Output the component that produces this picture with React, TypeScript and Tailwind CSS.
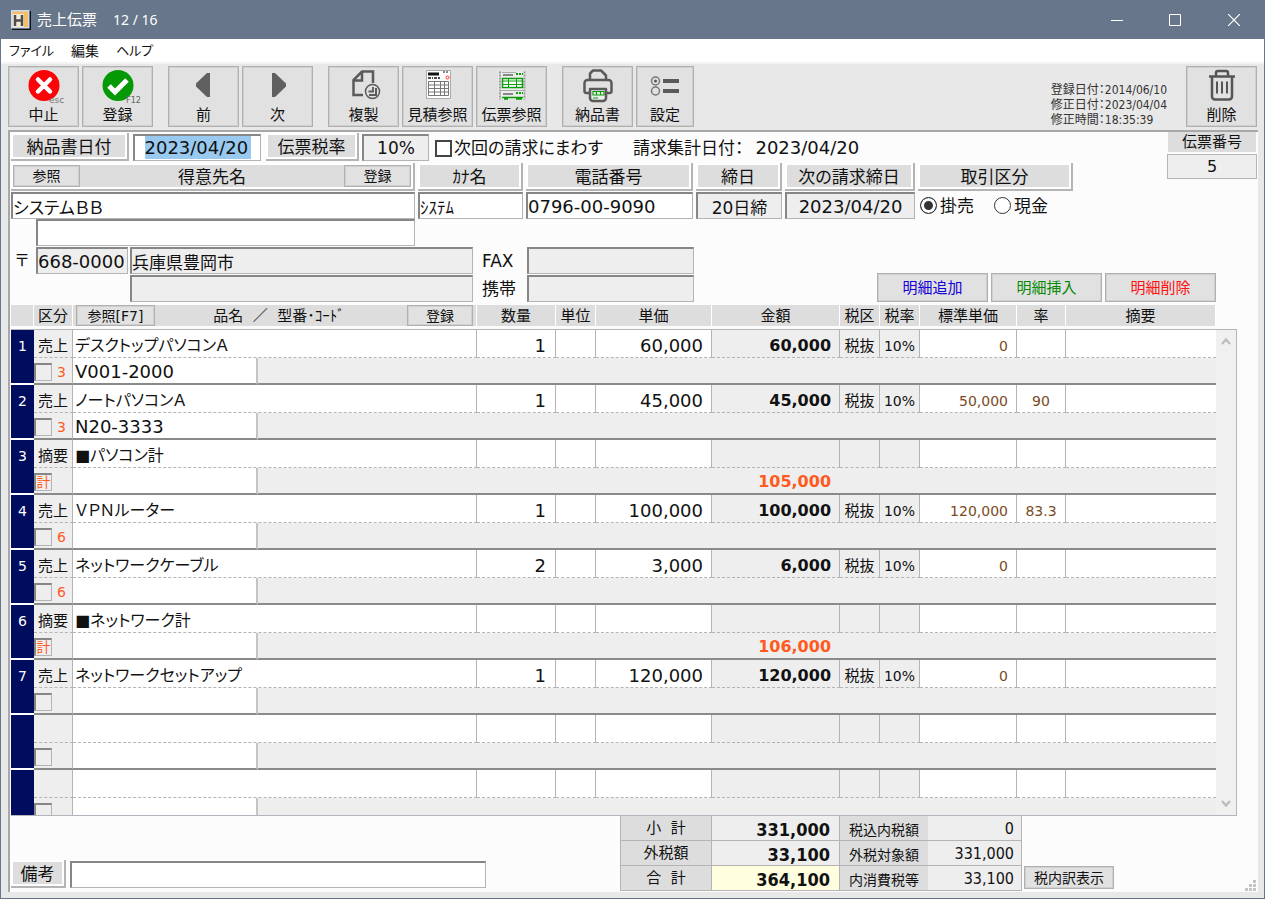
import type { ReactNode } from 'react'
import clsx from 'clsx'

const lines = [
  { no: 1, kind: '売上', name: 'デスクトップパソコンＡ', code: 'V001-2000', mark: '3', qty: '1', price: '60,000', amount: '60,000', std: '0' },
  { no: 2, kind: '売上', name: 'ノートパソコンＡ', code: 'N20-3333', mark: '3', qty: '1', price: '45,000', amount: '45,000', std: '50,000', rate: '90' },
  { no: 3, kind: '摘要', name: '■パソコン計', subtotal: '105,000' },
  { no: 4, kind: '売上', name: 'ＶＰＮルーター', mark: '6', qty: '1', price: '100,000', amount: '100,000', std: '120,000', rate: '83.3' },
  { no: 5, kind: '売上', name: 'ネットワークケーブル', mark: '6', qty: '2', price: '3,000', amount: '6,000', std: '0' },
  { no: 6, kind: '摘要', name: '■ネットワーク計', subtotal: '106,000' },
  { no: 7, kind: '売上', name: 'ネットワークセットアップ', qty: '1', price: '120,000', amount: '120,000', std: '0' },
  {},
  {},
] as any[]

const totals = [
  { label: '小  計', value: '331,000', sub: '税込内税額', subValue: '0' },
  { label: '外税額', value: '33,100', sub: '外税対象額', subValue: '331,000' },
  { label: '合  計', value: '364,100', sub: '内消費税等', subValue: '33,100' },
]

const sunken = 'border-t-2 border-l-2 border-r border-b border-t-[#868686] border-l-[#868686] border-r-[#b4b4b8] border-b-[#b4b4b8]'
const btn = 'border border-[#b0b0b0] bg-[#e1e1e1] shadow-[inset_0_0_0_1px_#d0d0d0]'

function Label({ className, children }: { className?: string; children: ReactNode }) {
  return (
    <div className={clsx('flex h-7 shrink-0 items-center justify-center border-r-2 border-b-2 border-[#b4b4b4] bg-[#dddddd] pt-0.5 text-[17px] leading-5 whitespace-nowrap shadow-[inset_0_0_0_2px_#fff]', className)}>
      {children}
    </div>
  )
}

function Field({ value = '', label, className, disabled }: { value?: string; label: string; className?: string; disabled?: boolean }) {
  return (
    <input
      aria-label={label}
      defaultValue={value}
      readOnly={disabled}
      className={clsx('h-[27px] shrink-0 leading-6 outline-none', sunken, disabled ? 'bg-[#eeeeee]' : 'bg-white', className)}
    />
  )
}

function ToolButton({ label, className, children }: { label: string; className?: string; children: ReactNode }) {
  return (
    <button className={clsx('flex h-[61px] shrink-0 flex-col items-center pt-0.5', btn, className ?? 'w-[71px]')}>
      <svg width="44" height="36" viewBox="0 0 44 36" fill="none" className="shrink-0 overflow-visible">{children}</svg>
      <span className="text-[15px] leading-5 whitespace-nowrap">{label}</span>
    </button>
  )
}

function Cols() {
  return (
    <colgroup>
      <col className="w-[23px]" />
      <col className="w-[39px]" />
      <col className="w-[185px]" />
      <col className="w-[219px]" />
      <col className="w-[79px]" />
      <col className="w-[40px]" />
      <col className="w-[116px]" />
      <col className="w-[128px]" />
      <col className="w-[40px]" />
      <col className="w-[40px]" />
      <col className="w-[97px]" />
      <col className="w-[49px]" />
      <col />
    </colgroup>
  )
}

function LineRows({ item }: { item: any }) {
  const cell = 'h-7 border-r border-r-[#b4b4b4] border-b border-b-[#b4b4b4] [border-bottom-style:dashed] whitespace-nowrap leading-5 pt-1'
  const low = 'h-[27px] border-b-2 border-b-[#8a8a8a] bg-[#eeeeee]'
  return (
    <>
      <tr>
        <td rowSpan={2} className="border-b-2 border-white bg-[#000c5e] pt-1 text-center align-top text-sm leading-6 text-white">{item.no}</td>
        <td className={clsx(cell, 'bg-[#eeeeee] text-center text-[15px]')}>{item.kind}</td>
        <td colSpan={2} className={clsx(cell, 'bg-white pl-0.5 text-base/5')}>{item.name}</td>
        <td className={clsx(cell, 'bg-white pr-[9px] text-right text-lg/5')}>{item.qty}</td>
        <td className={clsx(cell, 'bg-white')} />
        <td className={clsx(cell, 'bg-white pr-2 text-right text-lg/5')}>{item.price}</td>
        <td className={clsx(cell, 'bg-[#eeeeee] pr-2 text-right text-base/5 font-bold')}>{item.amount}</td>
        <td className={clsx(cell, 'bg-[#eeeeee] text-center text-[15px]')}>{item.amount && '税抜'}</td>
        <td className={clsx(cell, 'bg-[#eeeeee] text-center text-sm/5')}>{item.amount && '10%'}</td>
        <td className={clsx(cell, 'bg-white pr-2 text-right text-sm/5 text-[#7b4a1e]')}>{item.std}</td>
        <td className={clsx(cell, 'bg-white text-center text-sm/5 text-[#7b4a1e]')}>{item.rate}</td>
        <td className="h-7 border-b border-dashed border-[#b4b4b4] bg-white" />
      </tr>
      <tr>
        <td className={clsx(low, 'border-r border-r-[#b4b4b4]')}>
          <div className="flex items-center gap-[5px] pt-0.5 text-sm leading-5 text-[#ff5a1e]">
            {item.subtotal ? (
              <span className={clsx('flex size-[18px] items-center justify-center', sunken)}>計</span>
            ) : (
              <input type="checkbox" aria-label="行選択" className={clsx('size-[18px] appearance-none', sunken)} />
            )}
            {item.mark}
          </div>
        </td>
        <td className="h-[27px] border-r-2 border-b-2 border-r-[#c4c4c4] border-b-[#8a8a8a] bg-white pt-0.5 pl-0.5 text-lg/5">{item.code}</td>
        <td colSpan={4} className={low} />
        <td className={clsx(low, 'pt-0.5 pr-[9px] text-right text-base/5 font-bold text-[#ff5a1e]')}>{item.subtotal}</td>
        <td colSpan={5} className={low} />
      </tr>
    </>
  )
}

export default function App() {
  const th = 'h-[21px] border-r border-white bg-[#dddddd] text-center text-[15px] leading-5 font-normal whitespace-nowrap'
  return (
    <div className="flex min-h-screen flex-col border-x border-b border-[#67768a] bg-[#e8e8e8] font-['DejaVu_Sans','Noto_Sans_CJK_JP',sans-serif] text-[#111] [font-feature-settings:'palt']">
      {/* Title bar */}
      <header className="flex h-[39px] items-center bg-[#67768a] pl-[10px] text-white">
        <svg width="20" height="20" viewBox="0 0 20 20">
          <path d="M1 1h19v19H1z" fill="#111" />
          <path d="M0 0h18.500v18.500H0z" fill="#c9dcf2" />
          <path d="M1.500 1.500H17V17H1.500z" fill="#f6bd62" />
          <path d="M1.500 4H13v13H1.500z" fill="#f4ead8" />
          <path d="M4 5v11M11 5v11M4 10.500h7" stroke="#4d4d4d" strokeWidth="2.500" />
        </svg>
        <h1 className="flex gap-4 pl-1.5 font-['Noto_Sans','Noto_Sans_CJK_JP',sans-serif] text-[15px]">
          <span>売上伝票</span>
          <span className="text-sm leading-6">12 / 16</span>
        </h1>
        <div className="ml-auto flex">
          <button aria-label="最小化" className="flex h-[39px] w-[58px] items-center justify-center">
            <svg width="12" height="12" viewBox="0 0 12 12"><path d="M0 6.5h12" stroke="#fff" /></svg>
          </button>
          <button aria-label="最大化" className="flex h-[39px] w-[58px] items-center justify-center">
            <svg width="12" height="12" viewBox="0 0 12 12"><path d="M.5.5h11v11H.5z" fill="none" stroke="#fff" /></svg>
          </button>
          <button aria-label="閉じる" className="flex h-[39px] w-[60px] items-center justify-center">
            <svg width="12" height="12" viewBox="0 0 12 12"><path d="M0 0l12 12M12 0L0 12" stroke="#fff" strokeWidth="1.2" /></svg>
          </button>
        </div>
      </header>

      <nav className="flex h-[23px] items-center gap-[17px] bg-white pl-2 text-[13px] leading-5">
        <button>ファイル</button>
        <button className="text-sm">編集</button>
        <button>ヘルプ</button>
      </nav>

      {/* Toolbar */}
      <div className="flex items-start border-t-2 border-[#f4f4f4] px-[7px] py-0.5">
        <div className="flex gap-[3px]">
          <ToolButton label="中止">
            <circle cx="22" cy="16.500" r="15.5" fill="#fb0307" />
            <path d="M16 10.500l12 12M28 10.500l-12 12" stroke="#fff" strokeWidth="4.5" strokeLinecap="round" />
            <text x="27" y="34" fontSize="9" fill="#777">esc</text>
          </ToolButton>
          <ToolButton label="登録">
            <circle cx="22" cy="16.500" r="15.5" fill="#069906" />
            <path d="M13 17l6 6 12-12" stroke="#fff" strokeWidth="5" />
            <text x="30" y="34" fontSize="9" fill="#666" fontFamily="DejaVu Sans Condensed">F12</text>
          </ToolButton>
        </div>
        <div className="ml-[15px] flex gap-[3px]">
          <ToolButton label="前">
            <path d="M28 4v24h-3L14 17.500v-3L25 4z" fill="#606060" />
          </ToolButton>
          <ToolButton label="次">
            <path d="M16 4v24h3L30 17.500v-3L19 4z" fill="#606060" />
          </ToolButton>
        </div>
        <div className="ml-[15px] flex gap-[3px]">
          <ToolButton label="複製">
            <g stroke="#5a5a5a" strokeWidth="2.500">
              <path d="M21 26h-9.500V11L20 2.500h11V14M20 2.500v9h-8.500" />
              <circle cx="30.500" cy="22.500" r="7" strokeWidth="1.500" />
              <path d="M34 19v7h-7" strokeWidth="2" />
              <path d="M31 18v4.500h-4.500" strokeWidth="1.800" />
            </g>
          </ToolButton>
          <ToolButton label="見積参照">
            <path d="M10.500 1.500h24v28h-24z" fill="#fff" stroke="#aaa" />
            <path d="M12 5h11" stroke="#111" strokeWidth="3" />
            <path d="M12 9h5M18 9h6" stroke="#111" strokeWidth="1.500" strokeDasharray="3 1" />
            <path d="M27 3h6" stroke="#666" strokeDasharray="2 1" strokeWidth="1.500" />
            <circle cx="31.500" cy="8.500" r="1.500" stroke="#f22" />
            <path d="M12.500 12.500h20v14h-20zM12.500 16h20M12.500 19.500h20M12.500 23h20M18.500 12.500v14M24.500 12.500v14M28.500 12.500v14" stroke="#777" />
          </ToolButton>
          <ToolButton label="伝票参照">
            <path d="M8.500 2.500h27v28h-27z" fill="#ececec" />
            <path d="M10 2.500v28M34.500 2.500v28" stroke="#999" strokeWidth="2" strokeDasharray="2 1" />
            <path d="M13 6h10M13 25h10" stroke="#888" strokeWidth="2" />
            <path d="M9 21.500h26M12 3.500h14" stroke="#aaa" />
            <path d="M26 5h7M26 24h7" stroke="#0a9d0a" strokeWidth="2" strokeDasharray="2 1" />
            <path d="M12.500 9.500h20v9h-20z" fill="#fff" stroke="#0a9d0a" strokeWidth="1.500" />
            <path d="M12.500 12h20M12.500 15.500h20M18.500 9.500v9M26.500 9.500v9" stroke="#0a9d0a" />
            <path d="M12 28.500h21M14 30h4M26 30h6" stroke="#0a9d0a" strokeWidth="1.500" />
          </ToolButton>
        </div>
        <div className="ml-[15px] flex gap-[3px]">
          <ToolButton label="納品書">
            <g stroke="#5a5a5a" strokeWidth="2.500" strokeLinejoin="round">
              <path d="M14 11V4.500l3-3h8l5 5V11" />
              <path d="M13 24h-2.500a2 2 0 0 1-2-2v-8a3 3 0 0 1 3-3h21a3 3 0 0 1 3 3v8a2 2 0 0 1-2 2H31" />
              <path d="M14 20h16v9a3 3 0 0 1-3 3H17a3 3 0 0 1-3-3z" fill="#eee" />
            </g>
            <path d="M17 22.500h11v3.500H17zM20.500 22.500v3.500M24.500 22.500v3.500M17 29h5" stroke="#0a9d0a" strokeWidth="1.200" />
          </ToolButton>
          <ToolButton label="設定" className="w-[58px]">
            <path d="M20 12h16M20 22h16" stroke="#5a5a5a" strokeWidth="4" />
            <circle cx="12.500" cy="12" r="4" stroke="#777" strokeWidth="1.500" />
            <circle cx="12.500" cy="12" r="1.500" fill="#555" />
            <circle cx="12.500" cy="22" r="4" stroke="#777" strokeWidth="1.500" />
          </ToolButton>
        </div>
        <dl className="mt-[17px] mr-[19px] ml-auto grid grid-cols-[auto_auto] font-['DejaVu_Sans_Condensed','Noto_Sans_CJK_JP',sans-serif] text-xs leading-[15px] text-[#333]">
          <dt>登録日付：</dt><dd>2014/06/10</dd>
          <dt>修正日付：</dt><dd>2023/04/04</dd>
          <dt>修正時間：</dt><dd>18:35:39</dd>
        </dl>
        <ToolButton label="削除">
          <g stroke="#555" strokeWidth="2.500" strokeLinejoin="round">
            <path d="M9 7.500h26M16 7V4a2 2 0 0 1 2-2h8a2 2 0 0 1 2 2v3M12 8v19.500a3 3 0 0 0 3 3h14a3 3 0 0 0 3-3V8" />
            <path d="M17 12.500v12M22 12.500v12M27 12.500v12" strokeWidth="2" />
          </g>
        </ToolButton>
      </div>

      <main className="mr-[6px] mb-[6px] ml-[7px] flex grow flex-col border-t-2 border-l-2 border-[#a8a8a8] bg-[#fcfcfc] pl-px">
        <div className="flex items-start justify-between pr-px">
          <div className="flex flex-col pt-px">
            <div className="flex items-center">
              <Label className="w-[118px]">納品書日付</Label>
              <div className={clsx('ml-1 flex h-[27px] w-[128px] items-center justify-center bg-white', sunken)}>
                <input aria-label="納品書日付" defaultValue="2023/04/20" className="h-[23px] w-[106px] bg-[#99c9ef] text-lg leading-6 outline-none" />
              </div>
              <Label className="ml-[5px] w-[93px]">伝票税率</Label>
              <Field label="伝票税率" value="10%" disabled className="ml-[3px] w-[67px] text-center text-[17px]" />
              <label className="ml-1.5 flex items-center gap-0.5 pt-0.5 text-[17px] leading-6 whitespace-nowrap">
                <input type="checkbox" className="size-[17px] appearance-none border-2 border-[#444] bg-white" />
                次回の請求にまわす
              </label>
              <div className="ml-[30px] flex gap-3 pt-0.5 text-[17px] leading-6 whitespace-nowrap">
                <span>請求集計日付：</span>
                <span className="text-lg leading-6">2023/04/20</span>
              </div>
            </div>

            {/* Customer */}
            <div className="mt-0.5 flex gap-[3px]">
              <div className="flex h-7 w-[404px] items-center justify-between border-r-2 border-b-2 border-[#b4b4b4] bg-[#dddddd] px-0.5 shadow-[inset_0_0_0_2px_#fff]">
                <button className={clsx('h-[22px] w-[67px] text-sm leading-4', btn)}>参照</button>
                <span className="pt-0.5 text-[17px] leading-5">得意先名</span>
                <button className={clsx('h-[22px] w-[67px] text-sm leading-4', btn)}>登録</button>
              </div>
              <Label className="w-[105px]">ｶﾅ名</Label>
              <Label className="w-[167px]">電話番号</Label>
              <Label className="w-[86px]">締日</Label>
              <Label className="w-[130px]">次の請求締日</Label>
              <Label className="w-[155px]">取引区分</Label>
            </div>
            <div className="mt-px flex items-center gap-[3px]">
              <Field label="得意先名" value="システムＢＢ" className="w-[404px] text-[17px]" />
              <Field label="カナ名" value="ｼｽﾃﾑ" className="w-[105px] text-[17px]" />
              <Field label="電話番号" value="0796-00-9090" className="w-[167px] text-lg" />
              <Field label="締日" value="20日締" disabled className="w-[86px] text-center text-[17px]" />
              <Field label="次の請求締日" value="2023/04/20" disabled className="w-[130px] text-center text-lg" />
              <div className="ml-0.5 flex gap-5 text-[17px] leading-6">
                <label className="flex items-center gap-[3px]">
                  <input type="radio" name="kind" defaultChecked className="size-[17px] appearance-none rounded-full border border-[#333] bg-white checked:bg-[#333] checked:shadow-[inset_0_0_0_3px_#fff]" />
                  掛売
                </label>
                <label className="flex items-center gap-[3px]">
                  <input type="radio" name="kind" className="size-[17px] appearance-none rounded-full border border-[#333] bg-white checked:bg-[#333] checked:shadow-[inset_0_0_0_3px_#fff]" />
                  現金
                </label>
              </div>
            </div>
          </div>
          <div className="flex w-[90px] flex-col gap-0.5">
            <label htmlFor="slip-no" className="mx-px h-[20px] bg-[#dddddd] text-center text-[15px] leading-5">伝票番号</label>
            <input id="slip-no" readOnly value="5" className="h-[25px] w-full border border-[#b4b4bc] bg-[#eeeeee] text-center text-base leading-5" />
          </div>
        </div>

        <div className="flex items-end justify-between pr-[42px]">
          <div className="flex flex-col gap-px">
            <Field label="得意先名2" className="ml-[25px] w-[379px]" />
            <div className="flex items-center">
              <span className="w-[25px] pl-1 text-base leading-6">〒</span>
              <Field label="郵便番号" value="668-0000" disabled className="w-[92px] text-lg" />
              <Field label="住所1" value="兵庫県豊岡市" disabled className="ml-0.5 w-[343px] text-[17px]" />
              <label htmlFor="fax" className="w-[54px] pl-[9px] text-[17px] leading-6">FAX</label>
              <input id="fax" readOnly className={clsx('h-[27px] w-[167px] bg-[#eeeeee]', sunken)} />
            </div>
            <div className="flex items-center pl-[119px]">
              <Field label="住所2" disabled className="w-[343px]" />
              <label htmlFor="mobile" className="w-[54px] pl-[9px] text-[17px] leading-6">携帯</label>
              <input id="mobile" readOnly className={clsx('h-[27px] w-[167px] bg-[#eeeeee]', sunken)} />
            </div>
          </div>
          <div className="flex gap-[3px] text-[15px] leading-5">
            <button className={clsx('h-[29px] w-[111px] text-[#1400d8]', btn)}>明細追加</button>
            <button className={clsx('h-[29px] w-[111px] text-[#088a08]', btn)}>明細挿入</button>
            <button className={clsx('h-[29px] w-[111px] text-[#ff1010]', btn)}>明細削除</button>
          </div>
        </div>

        {/* Detail lines */}
        <div className="mt-[3px] pr-[42px]">
          <table className="w-full table-fixed border-separate border-spacing-0">
            <Cols />
            <thead>
              <tr>
                <th className={th} />
                <th className={th}>区分</th>
                <th className={th} colSpan={2}>
                  <div className="flex items-center justify-between px-[3px]">
                    <button className={clsx('h-[21px] w-[79px] text-sm leading-4', btn)}>参照[F7]</button>
                    <span className="pr-1 whitespace-pre">品名  ／  型番･ｺｰﾄﾞ</span>
                    <button className={clsx('h-[21px] w-[66px] text-sm leading-4', btn)}>登録</button>
                  </div>
                </th>
                <th className={th}>数量</th>
                <th className={th}>単位</th>
                <th className={th}>単価</th>
                <th className={th}>金額</th>
                <th className={th}>税区</th>
                <th className={th}>税率</th>
                <th className={th}>標準単価</th>
                <th className={th}>率</th>
                <th className={th}>摘要</th>
              </tr>
            </thead>
          </table>
        </div>
        <div className="mt-[3px] mr-[21px] flex h-[487px] overflow-hidden border-y border-r border-[#b4b4bc]">
          <div className="grow overflow-hidden">
            <table className="w-full table-fixed border-separate border-spacing-0">
              <Cols />
              <tbody>
                {lines.map((item, i) => (
                  <LineRows key={i} item={item} />
                ))}
              </tbody>
            </table>
          </div>
          <div className="flex w-5 shrink-0 flex-col items-center justify-between bg-[#f0f0f0] py-1.5">
            <button aria-label="上へ">
              <svg width="12" height="10" viewBox="0 0 12 10" fill="none"><path d="M2 8l4-4.500L10 8" stroke="#bbb" strokeWidth="2.200" /></svg>
            </button>
            <button aria-label="下へ">
              <svg width="12" height="10" viewBox="0 0 12 10" fill="none"><path d="M2 2l4 4.500L10 2" stroke="#bbb" strokeWidth="2.200" /></svg>
            </button>
          </div>
        </div>

        {/* Footer */}
        <div className="flex items-end">
          <div className="flex w-[609px] shrink-0 items-center gap-1 pb-[3px]">
            <Label className="w-[55px]">備考</Label>
            <Field label="備考" className="w-[416px]" />
          </div>
          <table className="w-[402px] table-fixed border-separate border-spacing-0 border-l border-[#b4b4b4]">
            <tbody>
              {totals.map((row, i) => (
                <tr key={row.label} className="[&>*]:h-[25px] [&>*]:border-b [&>*]:border-[#b4b4b4]">
                  <th className="w-[91px] border-r bg-[#dddddd] text-[15px] leading-5 font-normal whitespace-pre">{row.label}</th>
                  <td className={clsx("w-[128px] border-r pt-1 pr-[9px] text-right font-['DejaVu_Sans_Condensed'] text-lg/5 font-bold", i === 2 ? 'bg-[#ffffdf]' : 'bg-[#eeeeee]')}>{row.value}</td>
                  <th className="w-[88px] bg-[#dddddd] pt-1 text-sm leading-5 font-normal">{row.sub}</th>
                  <td className="border-r bg-[#eeeeee] pt-0.5 pr-[7px] text-right font-['DejaVu_Sans_Condensed'] text-base/5">{row.subValue}</td>
                </tr>
              ))}
            </tbody>
          </table>
          <button className={clsx('mb-0.5 ml-0.5 h-[23px] w-[90px] text-sm leading-4 whitespace-nowrap', btn)}>税内訳表示</button>
          <svg width="14" height="14" viewBox="0 0 14 14" className="ml-auto">
            <path d="M9 3h3v3H9zM9 7h3v3H9zM5 7h3v3H5zM9 11h3v3H9zM5 11h3v3H5zM1 11h3v3H1z" fill="#c4c4c4" />
          </svg>
        </div>
      </main>
    </div>
  )
}
